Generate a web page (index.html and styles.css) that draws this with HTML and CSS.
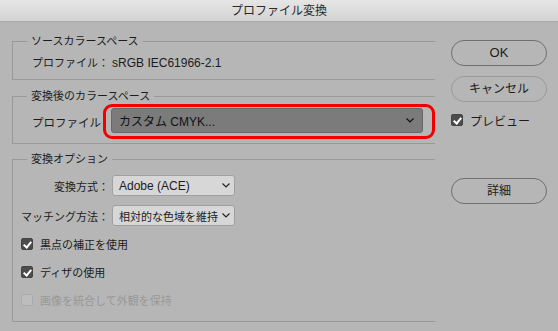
FILE: index.html
```html
<!DOCTYPE html>
<html lang="ja">
<head>
  <meta charset="UTF-8" />
  <title>プロファイル変換</title>
  <link rel="stylesheet" href="styles.css">
</head>
<body>

  <div class="window">
    <div class="titlebar">プロファイル変換</div>

    <div class="content">
      <div class="main">

        <!-- ソース -->
        <fieldset class="group group-source">
          <legend>ソースカラースペース</legend>
          <div class="info-line">プロファイル：&nbsp;<span class="lat">sRGB IEC61966-2.1</span></div>
        </fieldset>

        <!-- 変換後 -->
        <fieldset class="group group-dest">
          <legend>変換後のカラースペース</legend>
          <div class="dest-row">
            <span class="dest-label">プロファイル</span>
            <div class="highlight">
              <div class="select select-dark">
                <span>カスタム <span class="lat">CMYK...</span></span>
                <svg class="chevron" width="8" height="5" viewBox="0 0 8 5"><path d="M0.5 0.5 L4 4 L7.5 0.5" fill="none" stroke="#111" stroke-width="1.2"/></svg>
              </div>
            </div>
          </div>
        </fieldset>

        <!-- オプション -->
        <fieldset class="group group-options">
          <legend>変換オプション</legend>
          <div class="options-body">
            <div class="option-grid">
              <span class="opt-label">変換方式：</span>
              <div class="select select-light">
                <span class="lat">Adobe (ACE)</span>
                <svg class="chevron" width="8" height="5" viewBox="0 0 8 5"><path d="M0.5 0.5 L4 4 L7.5 0.5" fill="none" stroke="#222" stroke-width="1.1"/></svg>
              </div>
              <span class="opt-label">マッチング方法：</span>
              <div class="select select-light">
                <span>相対的な色域を維持</span>
                <svg class="chevron" width="8" height="5" viewBox="0 0 8 5"><path d="M0.5 0.5 L4 4 L7.5 0.5" fill="none" stroke="#222" stroke-width="1.1"/></svg>
              </div>
            </div>

            <label class="check-row"><span class="box checked"></span>黒点の補正を使用</label>
            <label class="check-row"><span class="box checked"></span>ディザの使用</label>
            <label class="check-row disabled"><span class="box"></span>画像を統合して外観を保持</label>
          </div>
        </fieldset>

      </div>

      <div class="side">
        <div class="btn btn-default"><span class="lat">OK</span></div>
        <div class="btn btn-plain">キャンセル</div>
        <label class="check-row preview"><span class="box checked"></span>プレビュー</label>
        <div class="btn btn-default btn-detail">詳細</div>
      </div>
    </div>
  </div>

</body>
</html>
```

FILE: styles.css
```css
/* Basic page styling */
* {
  box-sizing: border-box;
  margin: 0;
  padding: 0;
}
body {
  background: #b6b6b6;
  font-family: "Liberation Sans", "Noto Sans CJK JP", sans-serif;
  font-size: 11px;
  color: #1c1c1c;
}
.lat {
  font-size: 12px;
}
.window {
  width: 558px;
  height: 331px;
  background: #b6b6b6;
  border-radius: 0 0 5px 5px;
  overflow: hidden;
}
.titlebar {
  height: 22px;
  line-height: 22px;
  text-align: center;
  font-size: 12px;
  color: #2a2a2a;
  background: linear-gradient(#e6e6e6, #d3d3d3);
  border-bottom: 1px solid #a9a9a9;
}
.content {
  display: flex;
  padding: 0 11px 0 12px;
}
.main {
  width: 423px;
}

/* ============================================================
   Groups
   ============================================================ */
.group {
  border: 1px solid #999;
  border-right: none;
  min-width: 0;
  padding: 0;
}
.group legend {
  height: 16px;
  line-height: 16px;
  padding: 0 4px;
  margin-left: 14px;
}
.group-source {
  margin-top: 11px;
  padding: 6px 0 8px 19px;
}
.group-source legend {
  margin-left: -5px;
}
.info-line {
  height: 16px;
  line-height: 16px;
}
.group-dest {
  margin-top: 8px;
  padding: 0 0 4px 19px;
}
.group-dest legend {
  margin-left: -5px;
}
.group-options {
  margin-top: 7px;
  padding: 8px 0 11px 0;
}
.options-body {
  padding-left: 8px;
}

/* ============================================================
   Destination profile row
   ============================================================ */
.dest-row {
  display: flex;
  align-items: center;
}
.dest-label {
  width: 71px;
  font-size: 11.5px;
}
.highlight {
  flex: 1;
  border: 3px solid #f20000;
  border-radius: 9px;
  padding: 1px 9px 3px 5px;
}
.select {
  display: flex;
  align-items: center;
  justify-content: space-between;
  border-radius: 3px;
  padding: 0 8px 0 7px;
  white-space: nowrap;
}
.select-dark {
  height: 25px;
  background: #7b7b7b;
  border: 1px solid #686868;
  color: #111;
  font-size: 12px;
}
.select-light {
  width: 123px;
  height: 21px;
  background: #d7d7d7;
  border: 1px solid #a0a0a0;
  padding: 0 4px 0 6px;
  font-size: 11px;
}
.chevron {
  flex: none;
}

/* ============================================================
   Options
   ============================================================ */
.option-grid {
  display: grid;
  grid-template-columns: auto 123px;
  column-gap: 3px;
  row-gap: 9px;
  align-items: center;
  justify-content: start;
  margin-bottom: 8px;
}
.opt-label {
  text-align: right;
}
.check-row {
  display: flex;
  align-items: center;
  gap: 7px;
  height: 20px;
  margin-top: 8px;
}
.option-grid + .check-row {
  margin-top: 0;
}
.box {
  position: relative;
  flex: none;
  width: 12px;
  height: 12px;
  border-radius: 2px;
  border: 1px solid #aaa;
  background: #bdbdbd;
}
.box.checked {
  background: #4c4c4c;
  border-color: #444;
}
.box.checked::after {
  content: "";
  position: absolute;
  left: 3px;
  top: 1px;
  width: 3px;
  height: 6px;
  border: solid #fff;
  border-width: 0 2px 2px 0;
  transform: rotate(40deg);
}
.check-row.disabled {
  color: #989898;
}

/* ============================================================
   Side buttons
   ============================================================ */
.side {
  margin-left: 16px;
  width: 96px;
}
.btn {
  height: 26px;
  line-height: 24px;
  text-align: center;
  border-radius: 13px;
  font-size: 12px;
}
.btn .lat {
  font-size: 13px;
}
.btn-default {
  margin-top: 18px;
  border: 1.5px solid #6f6f6f;
}
.btn-plain {
  margin-top: 10px;
  border: 1.5px solid #9a9a9a;
}
.check-row.preview {
  margin-top: 8px;
  font-size: 12px;
}
.btn-detail {
  margin-top: 48px;
}
```
